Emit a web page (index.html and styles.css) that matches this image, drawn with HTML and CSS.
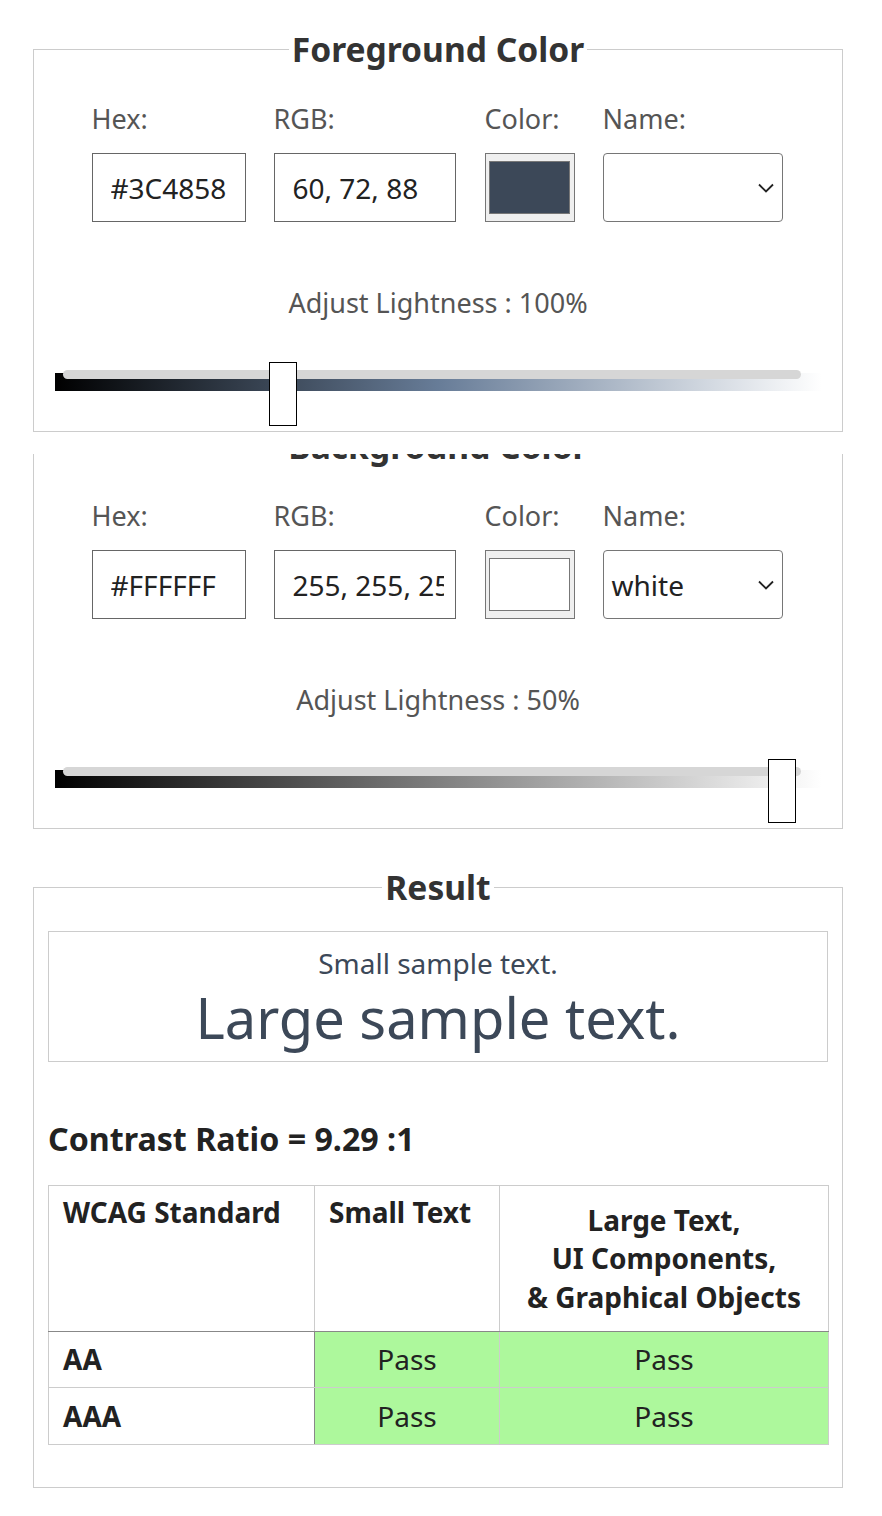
FILE: index.html
```html
<!DOCTYPE html>
<html lang="en">
<head>
<meta charset="utf-8">
<title>Color Contrast Checker</title>
<link rel="stylesheet" href="styles.css">
</head>
<body>
<main class="page">
  <fieldset class="panel picker">
    <legend>Foreground Color</legend>
    <div class="fields">
      <div class="field hex">
        <label for="fg-hex">Hex:</label>
        <input id="fg-hex" class="text-input" type="text" value="#3C4858">
      </div>
      <div class="field rgb">
        <label for="fg-rgb">RGB:</label>
        <input id="fg-rgb" class="text-input" type="text" value="60, 72, 88">
      </div>
      <div class="field color">
        <label>Color:</label>
        <div class="swatch"><div class="swatch-fill" style="background:#3C4858"></div></div>
      </div>
      <div class="field name">
        <label>Name:</label>
        <div class="select"><span class="select-value"></span><svg class="chevron" width="16" height="10" viewBox="0 0 16 10"><path d="M1 1.5 L8 8.5 L15 1.5" fill="none" stroke="#222" stroke-width="1.8"/></svg></div>
      </div>
    </div>
    <p class="lightness">Adjust Lightness : 100%</p>
    <div class="slider">
      <div class="slider-gradient fg-gradient"></div>
      <div class="slider-track"></div>
      <div class="slider-thumb" style="left:214px"></div>
    </div>
  </fieldset>

  <div class="clip">
    <fieldset class="panel picker">
      <legend>Background Color</legend>
      <div class="fields">
        <div class="field hex">
          <label for="bg-hex">Hex:</label>
          <input id="bg-hex" class="text-input" type="text" value="#FFFFFF">
        </div>
        <div class="field rgb">
          <label for="bg-rgb">RGB:</label>
          <input id="bg-rgb" class="text-input" type="text" value="255, 255, 255">
        </div>
        <div class="field color">
          <label>Color:</label>
          <div class="swatch"><div class="swatch-fill" style="background:#FFFFFF"></div></div>
        </div>
        <div class="field name">
          <label>Name:</label>
          <div class="select"><span class="select-value">white</span><svg class="chevron" width="16" height="10" viewBox="0 0 16 10"><path d="M1 1.5 L8 8.5 L15 1.5" fill="none" stroke="#222" stroke-width="1.8"/></svg></div>
        </div>
      </div>
      <p class="lightness">Adjust Lightness : 50%</p>
      <div class="slider">
        <div class="slider-gradient bg-gradient"></div>
        <div class="slider-track"></div>
        <div class="slider-thumb" style="left:713px"></div>
      </div>
    </fieldset>
  </div>

  <fieldset class="panel result">
    <legend>Result</legend>
    <div class="sample">
      <div class="sample-small">Small sample text.</div>
      <div class="sample-large">Large sample text.</div>
    </div>
    <h2 class="ratio">Contrast Ratio = 9.29 :1</h2>
    <table class="wcag">
      <colgroup>
        <col class="col-std">
        <col class="col-small">
        <col class="col-large">
      </colgroup>
      <thead>
        <tr>
          <th class="th-top">WCAG Standard</th>
          <th class="th-top">Small Text</th>
          <th class="th-center">Large Text,<br>UI Components,<br>&amp; Graphical Objects</th>
        </tr>
      </thead>
      <tbody>
        <tr>
          <td class="level">AA</td>
          <td class="pass">Pass</td>
          <td class="pass">Pass</td>
        </tr>
        <tr>
          <td class="level">AAA</td>
          <td class="pass">Pass</td>
          <td class="pass">Pass</td>
        </tr>
      </tbody>
    </table>
  </fieldset>
</main>
</body>
</html>
```

FILE: styles.css
```css
* { box-sizing: border-box; }

body {
  margin: 0;
  background: #fff;
  font-family: "Noto Sans", "Open Sans", sans-serif;
  color: #222;
}

.page {
  width: 810px;
  margin-left: 33px;
  padding: 29px 0 29px;
}

.panel {
  margin: 0;
  padding: 0 0 5px;
  border: 1px solid #ccc;
  min-width: 0;
}

.panel legend {
  margin: 0 auto;
  padding: 0 3px;
  font-size: 33.6px;
  line-height: 40px;
  font-weight: 700;
  color: #333;
}

.fields {
  display: flex;
  justify-content: center;
  gap: 28px;
  margin-top: 32px;
  padding-right: 2px;
}

.field {
  display: flex;
  flex-direction: column;
}

.field label {
  font-size: 27px;
  line-height: 36px;
  color: #555;
  margin-bottom: 16px;
}

.text-input {
  height: 69px;
  margin: 0;
  border: 1px solid #666;
  border-radius: 0;
  padding: 0 11px 0 18px;
  font-family: "Noto Sans", "Open Sans", sans-serif;
  font-size: 28px;
  color: #222;
  background: #fff;
  outline: none;
}

.hex .text-input { width: 154px; }
.rgb .text-input { width: 182px; }
.color { margin-left: 1px; }

.swatch {
  width: 90px;
  height: 69px;
  padding: 7px 4px 7px 3px;
  background: #efefef;
  border: 1px solid #767676;
}

.swatch-fill {
  height: 100%;
  border: 1px solid #777;
}

.select {
  width: 180px;
  height: 69px;
  border: 1px solid #767676;
  border-radius: 4px;
  display: flex;
  align-items: center;
  justify-content: space-between;
  padding: 0 8px;
  font-size: 28px;
  color: #222;
  background: #fff;
}

.chevron { display: block; }

.lightness {
  margin: 63px 0 0;
  text-align: center;
  font-size: 27px;
  line-height: 36px;
  color: #555;
}

.slider {
  position: relative;
  height: 64px;
  margin: 41px 20px 0 21px;
  padding-top: 11px;
}

.slider-gradient {
  height: 18px;
}

.fg-gradient {
  background: linear-gradient(to right, #000, hsl(214, 19%, 50%), #fff);
}

.bg-gradient {
  background: linear-gradient(to right, #000, #fff);
}

.slider-track {
  position: absolute;
  top: 8px;
  left: 8px;
  width: 738px;
  height: 9px;
  border-radius: 5px;
  background: #d6d6d6;
}

.slider-thumb {
  position: absolute;
  top: 0;
  width: 28px;
  height: 64px;
  background: #fff;
  border: 1px solid #000;
}

.clip {
  margin-top: 22px;
  overflow: hidden;
}

.clip .panel {
  margin-top: -28px;
}

.result {
  margin-top: 38px;
  padding: 0 14px 42px;
}

.sample {
  margin-top: 24px;
  border: 1px solid #ccc;
  text-align: center;
  color: #3c4858;
  padding: 12px 0 11px;
}

.sample-small {
  font-size: 28px;
  line-height: 38px;
}

.sample-large {
  font-size: 56px;
  line-height: 66px;
  margin-top: 2px;
}

.ratio {
  margin: 57px 0 0;
  font-size: 32.2px;
  line-height: 40px;
  font-weight: 700;
  color: #222;
}

.wcag {
  width: 100%;
  margin-top: 26px;
  border-collapse: collapse;
  table-layout: fixed;
  font-size: 28px;
  line-height: 38.5px;
}

.col-std { width: 266px; }
.col-small { width: 185px; }
.col-large { width: 329px; }

.wcag th {
  border: 1px solid #ccc;
  border-bottom-color: #888;
  padding: 14.5px 14px;
  font-weight: 700;
  text-align: left;
}

.wcag .th-top {
  vertical-align: top;
  padding-top: 7px;
}

.wcag .th-center {
  text-align: center;
  vertical-align: middle;
}

.wcag td {
  border: 1px solid #ccc;
  padding: 8.5px 14px;
}

.wcag .level {
  font-weight: 700;
  text-align: left;
  border-right-color: #888;
}

.wcag .pass {
  text-align: center;
  background: #adf89c;
}
```
